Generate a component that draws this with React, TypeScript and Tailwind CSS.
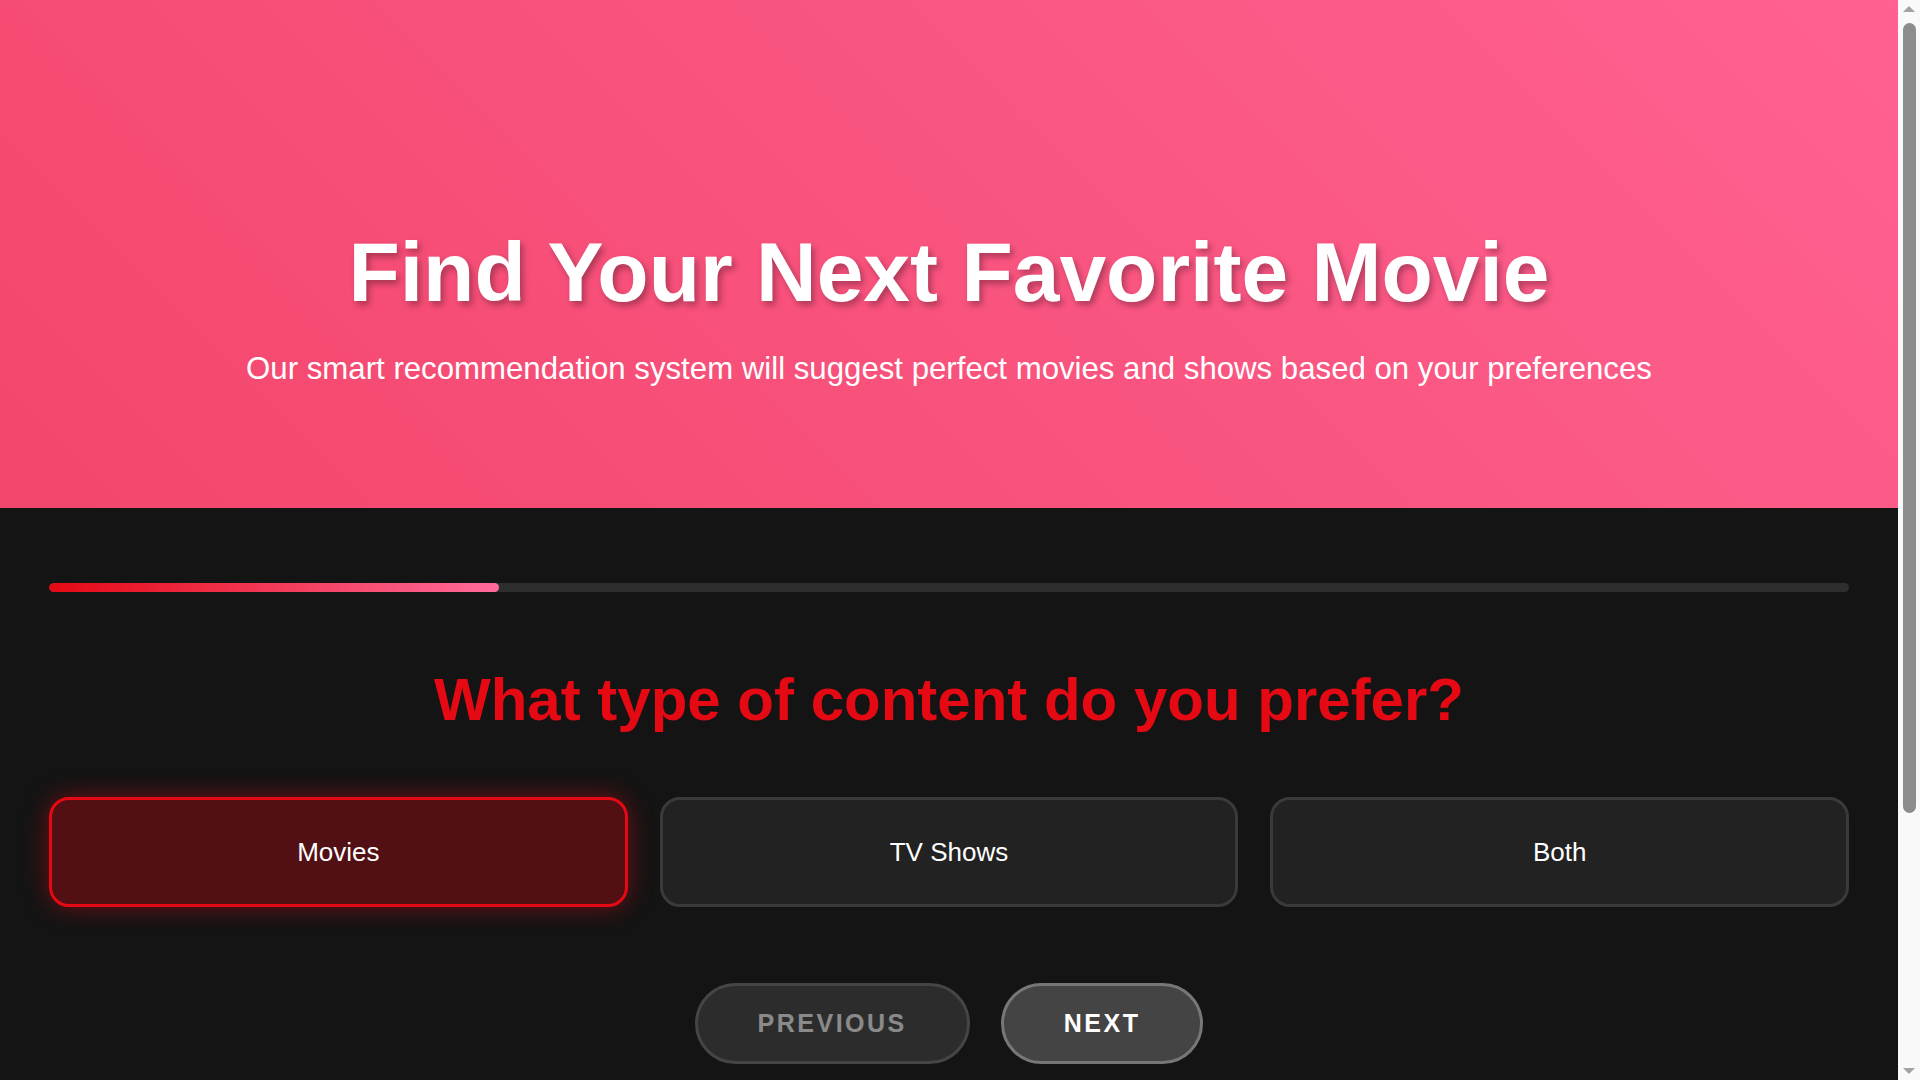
import React, { useState } from "react";

const options = ["Movies", "TV Shows", "Both"];

function FakeScrollbar() {
  return (
    <div className="fixed right-0 top-0 flex h-screen w-[22px] flex-col items-center bg-[#f9f9f9]">
      <svg width="14" height="8" viewBox="0 0 14 8" className="mt-[5px]">
        <polygon points="7,1 13,7 1,7" fill="#a3a3a3" />
      </svg>
      <div className="mt-[10px] h-[790px] w-[13px] rounded-full bg-[#8c8c8c]" />
      <div className="flex-1" />
      <svg width="14" height="8" viewBox="0 0 14 8" className="mb-[5px]">
        <polygon points="1,1 13,1 7,7" fill="#a3a3a3" />
      </svg>
    </div>
  );
}

export default function App() {
  const [selected, setSelected] = useState("Movies");
  const progress = 25;
  return (
    <div className="min-h-[1440px] w-[1898px] bg-[#141414] font-['Liberation_Sans',Arial,sans-serif] text-white">
      <header className="bg-[linear-gradient(45deg,#f3466c,#ff6191)] pt-[222px] pb-[116px] text-center">
        <h1 className="text-[84px] font-bold leading-[100px] text-white [text-shadow:3px_4px_6px_rgba(0,0,0,0.3)]">
          Find Your Next Favorite Movie
        </h1>
        <p className="mt-[24px] text-[31.2px] leading-[46px] text-white">
          Our smart recommendation system will suggest perfect movies and shows based on your preferences
        </p>
      </header>

      <main className="mx-auto max-w-[1800px] pt-[75px] pb-[376px]">
        <div className="h-[9px] w-full overflow-hidden rounded-full bg-[#2e2e2e]">
          <div
            className="h-full rounded-full bg-[linear-gradient(90deg,#e50914,#ff6b9b)]"
            style={{ width: `${progress}%` }}
          />
        </div>

        <h2 className="mt-[72px] text-center text-[60px] font-bold leading-[72px] text-[#e50914]">
          What type of content do you prefer?
        </h2>

        <div className="mt-[61px] grid grid-cols-3 gap-[32px]">
          {options.map((o) => {
            const active = selected === o;
            return (
              <button
                key={o}
                onClick={() => setSelected(o)}
                className={
                  active
                    ? "h-[110px] rounded-[20px] border-[3px] border-[#e50914] bg-[#531014] text-[26px] text-white shadow-[0_0_24px_rgba(229,9,20,0.45)]"
                    : "h-[110px] rounded-[20px] border-[3px] border-[#3a3a3a] bg-[#222222] text-[26px] text-white"
                }
              >
                {o}
              </button>
            );
          })}
        </div>

        <div className="mt-[76px] flex justify-center gap-[31px]">
          <button className="h-[81px] rounded-full border-[3px] border-[#777777] bg-[#444444] px-[60px] text-[25px] font-bold tracking-[2.5px] text-white opacity-50">
            PREVIOUS
          </button>
          <button className="h-[81px] rounded-full border-[3px] border-[#777777] bg-[#444444] px-[60px] text-[25px] font-bold tracking-[2.5px] text-white">
            NEXT
          </button>
        </div>
      </main>
      <FakeScrollbar />
    </div>
  );
}
